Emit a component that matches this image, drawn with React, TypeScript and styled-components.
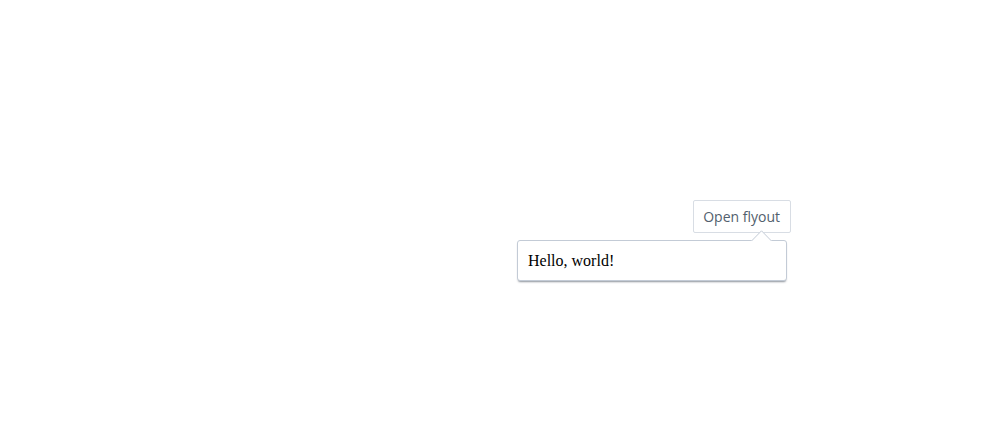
import React from "react";
import styled, { createGlobalStyle } from "styled-components";

const Global = createGlobalStyle`
  html, body { margin: 0; padding: 0; background: #fff; }
  body { font-family: "Liberation Serif", serif; }
`;

const Page = styled.div`
  width: 992px;
  height: 435px;
  display: flex;
  justify-content: flex-end;
  align-items: flex-start;
  padding: 200px 201px 0 0;
  box-sizing: border-box;
`;

const Anchor = styled.div`
  position: relative;
`;

const TriggerButton = styled.button`
  display: block;
  height: 33px;
  box-sizing: border-box;
  padding: 0 10px 0 9px;
  margin: 0;
  border: 1px solid #d8dde4;
  border-radius: 2px;
  background: #fff;
  color: #52606d;
  font-family: "Open Sans", "Noto Sans", sans-serif;
  font-size: 14px;
  line-height: 31px;
  cursor: pointer;
`;

const Flyout = styled.div`
  position: absolute;
  top: 40px;
  right: 4px;
  width: 270px;
  box-sizing: border-box;
  padding: 11px 10px 10px;
  background: #fff;
  border: 1px solid #c3cbd6;
  border-radius: 3px;
  box-shadow: 0 2px 2px -1px rgba(50, 60, 75, 0.55);
  font-family: "Liberation Serif", serif;
  font-size: 16px;
  line-height: 18px;
  color: #000;
  white-space: nowrap;
`;

const Arrow = styled.svg`
  position: absolute;
  top: -11px;
  left: 233px;
  display: block;
  overflow: visible;
`;

export default function App() {
  return (
    <>
      <Global />
      <Page>
        <Anchor>
          <TriggerButton>Open flyout</TriggerButton>
          <Flyout>
            <Arrow width="22" height="12" viewBox="0 0 22 12">
              <polygon points="0,11 10.5,0.5 21,11 21,12 0,12" fill="#fff" />
              <polyline
                points="0.5,11 10.5,0.8 20.5,11"
                fill="none"
                stroke="#c3cbd6"
                strokeWidth="1"
              />
            </Arrow>
            Hello, world!
          </Flyout>
        </Anchor>
      </Page>
    </>
  );
}
